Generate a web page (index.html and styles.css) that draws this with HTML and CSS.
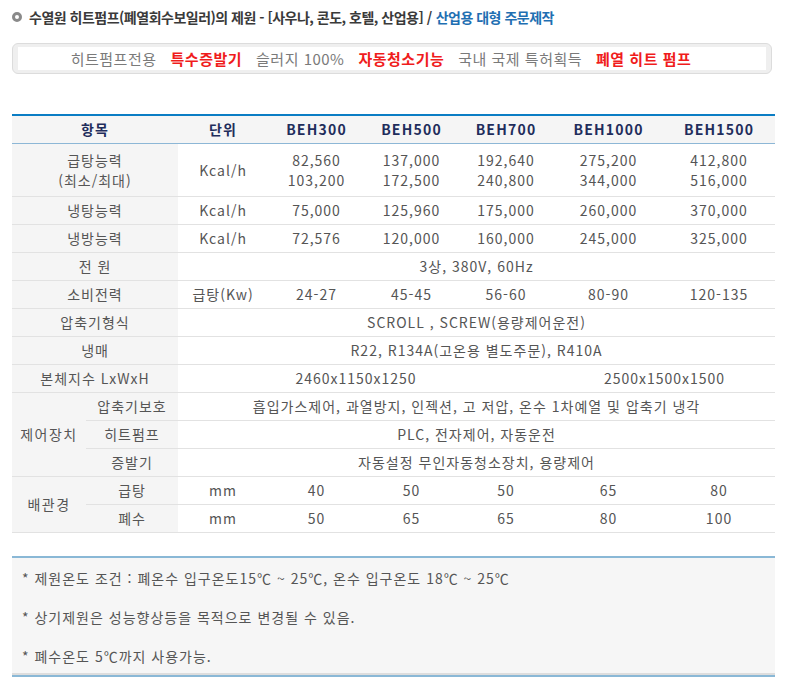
FILE: index.html
```html
<!DOCTYPE html>
<html lang="ko">
<head>
<meta charset="utf-8">
<link rel="stylesheet" href="styles.css">
</head>
<body>
<div class="page">
  <h1 class="title"><span class="bullet"></span><span class="t-dark">수열원 히트펌프(폐열회수보일러)의 제원 - [사우나, 콘도, 호텔, 산업용] / </span><span class="t-blue">산업용 대형 주문제작</span></h1>

  <div class="banner">
    <div class="banner-inner">
      <span class="b-gray">히트펌프전용</span>
      <span class="b-red">특수증발기</span>
      <span class="b-gray">슬러지 100%</span>
      <span class="b-red">자동청소기능</span>
      <span class="b-gray">국내 국제 특허획득</span>
      <span class="b-red">폐열 히트 펌프</span>
    </div>
  </div>

  <table class="spec">
    <colgroup>
      <col class="c-a"><col class="c-b"><col class="c-unit"><col class="c-300"><col class="c-500"><col class="c-700"><col class="c-1000"><col class="c-1500">
    </colgroup>
    <thead>
      <tr><th colspan="2">항목</th><th>단위</th><th>BEH300</th><th>BEH500</th><th>BEH700</th><th>BEH1000</th><th>BEH1500</th></tr>
    </thead>
    <tbody>
      <tr class="tall"><td colspan="2" class="lbl">급탕능력<br>(최소/최대)</td><td>Kcal/h</td><td>82,560<br>103,200</td><td>137,000<br>172,500</td><td>192,640<br>240,800</td><td>275,200<br>344,000</td><td>412,800<br>516,000</td></tr>
      <tr><td colspan="2" class="lbl">냉탕능력</td><td>Kcal/h</td><td>75,000</td><td>125,960</td><td>175,000</td><td>260,000</td><td>370,000</td></tr>
      <tr><td colspan="2" class="lbl">냉방능력</td><td>Kcal/h</td><td>72,576</td><td>120,000</td><td>160,000</td><td>245,000</td><td>325,000</td></tr>
      <tr><td colspan="2" class="lbl">전 원</td><td colspan="6">3상, 380V, 60Hz</td></tr>
      <tr><td colspan="2" class="lbl">소비전력</td><td>급탕(Kw)</td><td>24-27</td><td>45-45</td><td>56-60</td><td>80-90</td><td>120-135</td></tr>
      <tr><td colspan="2" class="lbl">압축기형식</td><td colspan="6">SCROLL , SCREW(용량제어운전)</td></tr>
      <tr><td colspan="2" class="lbl">냉매</td><td colspan="6">R22, R134A(고온용 별도주문), R410A</td></tr>
      <tr><td colspan="2" class="lbl">본체지수 LxWxH</td><td colspan="4" class="dim1">2460x1150x1250</td><td colspan="2">2500x1500x1500</td></tr>
      <tr><td rowspan="3" class="lbl grp">제어장치</td><td class="lbl">압축기보호</td><td colspan="6">흡입가스제어, 과열방지, 인젝션, 고 저압, 온수 1차예열 및 압축기 냉각</td></tr>
      <tr><td class="lbl">히트펌프</td><td colspan="6">PLC, 전자제어, 자동운전</td></tr>
      <tr><td class="lbl">증발기</td><td colspan="6">자동설정 무인자동청소장치, 용량제어</td></tr>
      <tr><td rowspan="2" class="lbl grp">배관경</td><td class="lbl">급탕</td><td>mm</td><td>40</td><td>50</td><td>50</td><td>65</td><td>80</td></tr>
      <tr><td class="lbl">폐수</td><td>mm</td><td>50</td><td>65</td><td>65</td><td>80</td><td>100</td></tr>
    </tbody>
  </table>

  <div class="notes">
    <p>* 제원온도 조건 : 폐온수 입구온도15℃ ~ 25℃, 온수 입구온도 18℃ ~ 25℃</p>
    <p>* 상기제원은 성능향상등을 목적으로 변경될 수 있음.</p>
    <p>* 폐수온도 5℃까지 사용가능.</p>
  </div>
</div>
</body>
</html>
```

FILE: styles.css
```css
* { box-sizing: border-box; }
html, body { margin: 0; padding: 0; background: #fff; }
body {
  font-family: "Noto Sans CJK KR", "Noto Sans", sans-serif;
  color: #555;
}
.page { padding: 8px 12px 0 12px; width: 787px; }

.title {
  display: flex;
  align-items: center;
  margin: 0;
  height: 18px;
  font-size: 14px;
  font-weight: bold;
  letter-spacing: -0.5px;
  white-space: nowrap;
}
.bullet {
  width: 10px;
  height: 10px;
  border: 3px solid #8a8a8a;
  border-radius: 50%;
  background: #fff;
  margin-right: 7px;
  flex: none;
}
.t-dark { color: #3a3a3a; }
.t-blue { color: #1f6fb2; margin-left: 4px; }

.banner {
  margin-top: 17px;
  width: 760px;
  height: 31px;
  border: 1px solid #dcdcdc;
  border-radius: 6px;
  background: #efefef;
  padding: 3px 5px;
}
.banner-inner {
  height: 100%;
  background: #fff;
  display: flex;
  align-items: center;
  justify-content: center;
  gap: 14px;
  padding-right: 22px;
  font-size: 15px;
  letter-spacing: 0.5px;
  white-space: nowrap;
}
.b-gray { color: #7a7a7a; }
.b-red { color: #f01c1c; font-weight: bold; }

.spec {
  margin-top: 40px;
  width: 763px;
  table-layout: fixed;
  border-collapse: collapse;
  border-top: 2px solid #0a7dc4;
  font-size: 14px;
  color: #555;
}
.c-a { width: 74px; }
.c-b { width: 92px; }
.c-unit { width: 90px; }
.c-300 { width: 97px; }
.c-500 { width: 93px; }
.c-700 { width: 96px; }
.c-1000 { width: 109px; }
.c-1500 { width: 112px; }

.spec th {
  height: 28px;
  padding: 0;
  background: #f5f5f5;
  color: #1f2d5c;
  font-size: 14px;
  font-weight: bold;
  letter-spacing: 1.2px;
  border-bottom: 1px solid #8db7d6;
  text-align: center;
}
.spec td {
  height: 28px;
  padding: 0;
  text-align: center;
  border-bottom: 1px solid #e2e2e2;
  line-height: 20px;
  letter-spacing: 1px;
  white-space: nowrap;
}
.spec tr.tall td { height: 53px; }
.spec td.lbl { background: #f5f5f5; }
.spec td.grp { letter-spacing: 1.5px; }
.spec td.dim1 { padding-right: 20px; }

.notes {
  margin-top: 23px;
  width: 763px;
  height: 121px;
  background: #f6f6f6;
  border-top: 2px solid #8ab8d6;
  border-bottom: 2px solid #8ab8d6;
  box-shadow: inset 0 -2px 0 #dddddd;
  padding: 9px 10px 0 10px;
  font-size: 14px;
  letter-spacing: 1px;
  color: #555;
}
.notes p {
  margin: 0;
  height: 39px;
  line-height: 22px;
}
```
